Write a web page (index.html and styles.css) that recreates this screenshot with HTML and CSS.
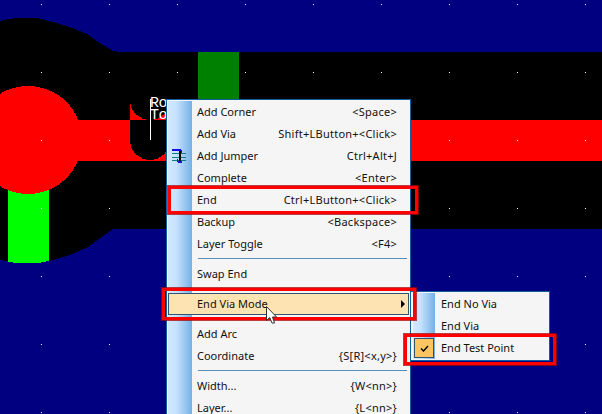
FILE: index.html
```html
<!DOCTYPE html>
<html lang="en">
<head>
<meta charset="utf-8">
<title>Route context menu</title>
<link rel="stylesheet" href="styles.css">
</head>
<body>
<div class="board">
  <svg class="pcb" width="602" height="414" viewBox="0 0 602 414" shape-rendering="crispEdges">
    <defs>
      <pattern id="grid" x="41" y="4" width="68" height="68" patternUnits="userSpaceOnUse">
        <rect width="1" height="1" fill="#fff"/>
      </pattern>
    </defs>
    <rect width="602" height="414" fill="#000080"/>
    <path d="M0 21 L8 19 L17 18 L38 18 L53 22 L70 27 L87 34 L100 43 L113 51 L120 52 H602 V229 H125 L113 229 L103 236 L88 247 L70 255 L53 260 L38 263 H17 L0 260 Z" fill="#000"/>
    <rect x="198" y="52" width="41" height="68" fill="#008000"/>
    <path d="M8 180 H49 V261 L38 263 H17 L8 262 Z" fill="#0f0"/>
    <rect x="60" y="120" width="542" height="41" fill="#f00"/>
    <circle cx="28" cy="140" r="54" fill="#f00"/>
    <rect x="130" y="102" width="40" height="18" fill="#f00"/>
    <circle cx="150" cy="100" r="20" fill="#000"/>
    <rect x="130" y="120" width="40" height="20" fill="#000"/>
    <circle cx="150" cy="140" r="20" fill="#000"/>
    <rect x="150" y="99" width="1" height="41" fill="#fff"/>
    <rect width="602" height="414" fill="url(#grid)"/>
  </svg>
  <span class="tag">Ro<br>To</span>

  <div class="menu main-menu">
    <div class="gutter"></div>
    <div class="item"><span>Add Corner</span><span>&lt;Space&gt;</span></div>
    <div class="item"><span>Add Via</span><span>Shift+LButton+&lt;Click&gt;</span></div>
    <div class="item"><svg class="jumper" width="15" height="15" viewBox="0 0 15 15" shape-rendering="crispEdges"><path d="M0 4.500H14M0 8.500H14M0 11.500H14" stroke="#108080" fill="none"/><path d="M0 0H9V1H10V4H9V2H0ZM5 10H6V12H10V14H6V13H5Z" fill="#1010e0"/><path d="M7 2H9V12H7Z" fill="#000"/></svg><span>Add Jumper</span><span>Ctrl+Alt+J</span></div>
    <div class="item"><span>Complete</span><span>&lt;Enter&gt;</span></div>
    <div class="item"><span>End</span><span>Ctrl+LButton+&lt;Click&gt;</span></div>
    <div class="item"><span>Backup</span><span>&lt;Backspace&gt;</span></div>
    <div class="item"><span>Layer Toggle</span><span>&lt;F4&gt;</span></div>
    <div class="sep"></div>
    <div class="item"><span>Swap End</span></div>
    <div class="sep"></div>
    <div class="item active"><span>End Via Mode</span><i class="arrow"></i></div>
    <div class="sep"></div>
    <div class="item"><span>Add Arc</span></div>
    <div class="item"><span>Coordinate</span><span>{S[R]&lt;x,y&gt;}</span></div>
    <div class="sep"></div>
    <div class="item"><span>Width...</span><span>{W&lt;nn&gt;}</span></div>
    <div class="item"><span>Layer...</span><span>{L&lt;nn&gt;}</span></div>
  </div>

  <div class="menu sub-menu">
    <div class="gutter"></div>
    <div class="item"><span>End No Via</span></div>
    <div class="item"><span>End Via</span></div>
    <div class="item"><i class="check"><svg width="9" height="7" viewBox="0 0 9 7"><path d="M1 3.500L3.500 6L8 1" stroke="#000" stroke-width="1.400" fill="none"/></svg></i><span>End Test Point</span></div>
  </div>

  <i class="mark mark-end"></i>
  <i class="mark mark-mode"></i>
  <i class="mark mark-test"></i>

  <svg class="cursor" width="13" height="18" viewBox="0 0 13 18"><path d="M.5.500V14.500L3.700 11.500L6 17H8.500L6.500 11H10.500Z" fill="#fff" stroke="#333"/></svg>
</div>
</body>
</html>
```
FILE: styles.css
```css
html, body {
  margin: 0;
  padding: 0;
  background: #000080;
}
.board {
  position: relative;
  width: 602px;
  height: 414px;
  overflow: hidden;
  font-family: "Noto Sans", sans-serif;
}
.pcb {
  position: absolute;
  left: 0;
  top: 0;
  display: block;
}
.tag {
  position: absolute;
  left: 150px;
  top: 98px;
  color: #fff;
  font: 15px/12px "Liberation Mono", monospace;
  letter-spacing: -.5px;
}
.menu {
  position: absolute;
  box-sizing: border-box;
  background: #f5f5f5;
  border: 1px solid #0e5f9c;
  color: #111;
  font-size: 11px;
}
.main-menu {
  left: 166px;
  top: 99px;
  width: 245px;
  height: 330px;
  padding: 1px;
}
.sub-menu {
  left: 410px;
  top: 291px;
  width: 140px;
  height: 70px;
  padding: 1px 2px;
}
.gutter {
  position: absolute;
  left: 1px;
  top: 1px;
  bottom: 1px;
  width: 24px;
  background: linear-gradient(to right, #d2e9ff, #c6e2fd 35%, #74b0e6);
}
.sub-menu .gutter { left: 2px; width: 22px; }
.item {
  position: relative;
  display: flex;
  justify-content: space-between;
  align-items: center;
  box-sizing: border-box;
  height: 22px;
  padding: 0 12px 2px 29px;
}
.item span + span { letter-spacing: .25px; }
.sub-menu .item { padding-left: 28px; }
.active {
  background: #fde3b2;
  outline: 1px solid #33536e;
  outline-offset: -1px;
}
.sep {
  position: relative;
  height: 1px;
  margin: 3px 2px 4px 30px;
  background: #5b8db5;
}
.arrow {
  border-left: 4px solid #000;
  border-top: 4px solid transparent;
  border-bottom: 4px solid transparent;
  margin-right: -8px;
  margin-top: 2px;
}
.jumper {
  position: absolute;
  left: 4px;
  top: 4px;
}
.check {
  position: absolute;
  left: 1px;
  top: 1px;
  box-sizing: border-box;
  width: 20px;
  height: 20px;
  background: #fdc462;
  border: 1px solid #33536e;
  display: flex;
  align-items: center;
  justify-content: center;
}
.mark {
  position: absolute;
  box-sizing: border-box;
  border: 3px solid #f00;
  box-shadow: 0 0 0 1px rgba(170, 0, 0, .75);
}
.mark-end { left: 168px; top: 186px; width: 250px; height: 28px; }
.mark-mode { left: 162px; top: 288px; width: 254px; height: 32px; }
.mark-test { left: 404px; top: 334px; width: 152px; height: 31px; }
.cursor {
  position: absolute;
  left: 266px;
  top: 306px;
}
```
